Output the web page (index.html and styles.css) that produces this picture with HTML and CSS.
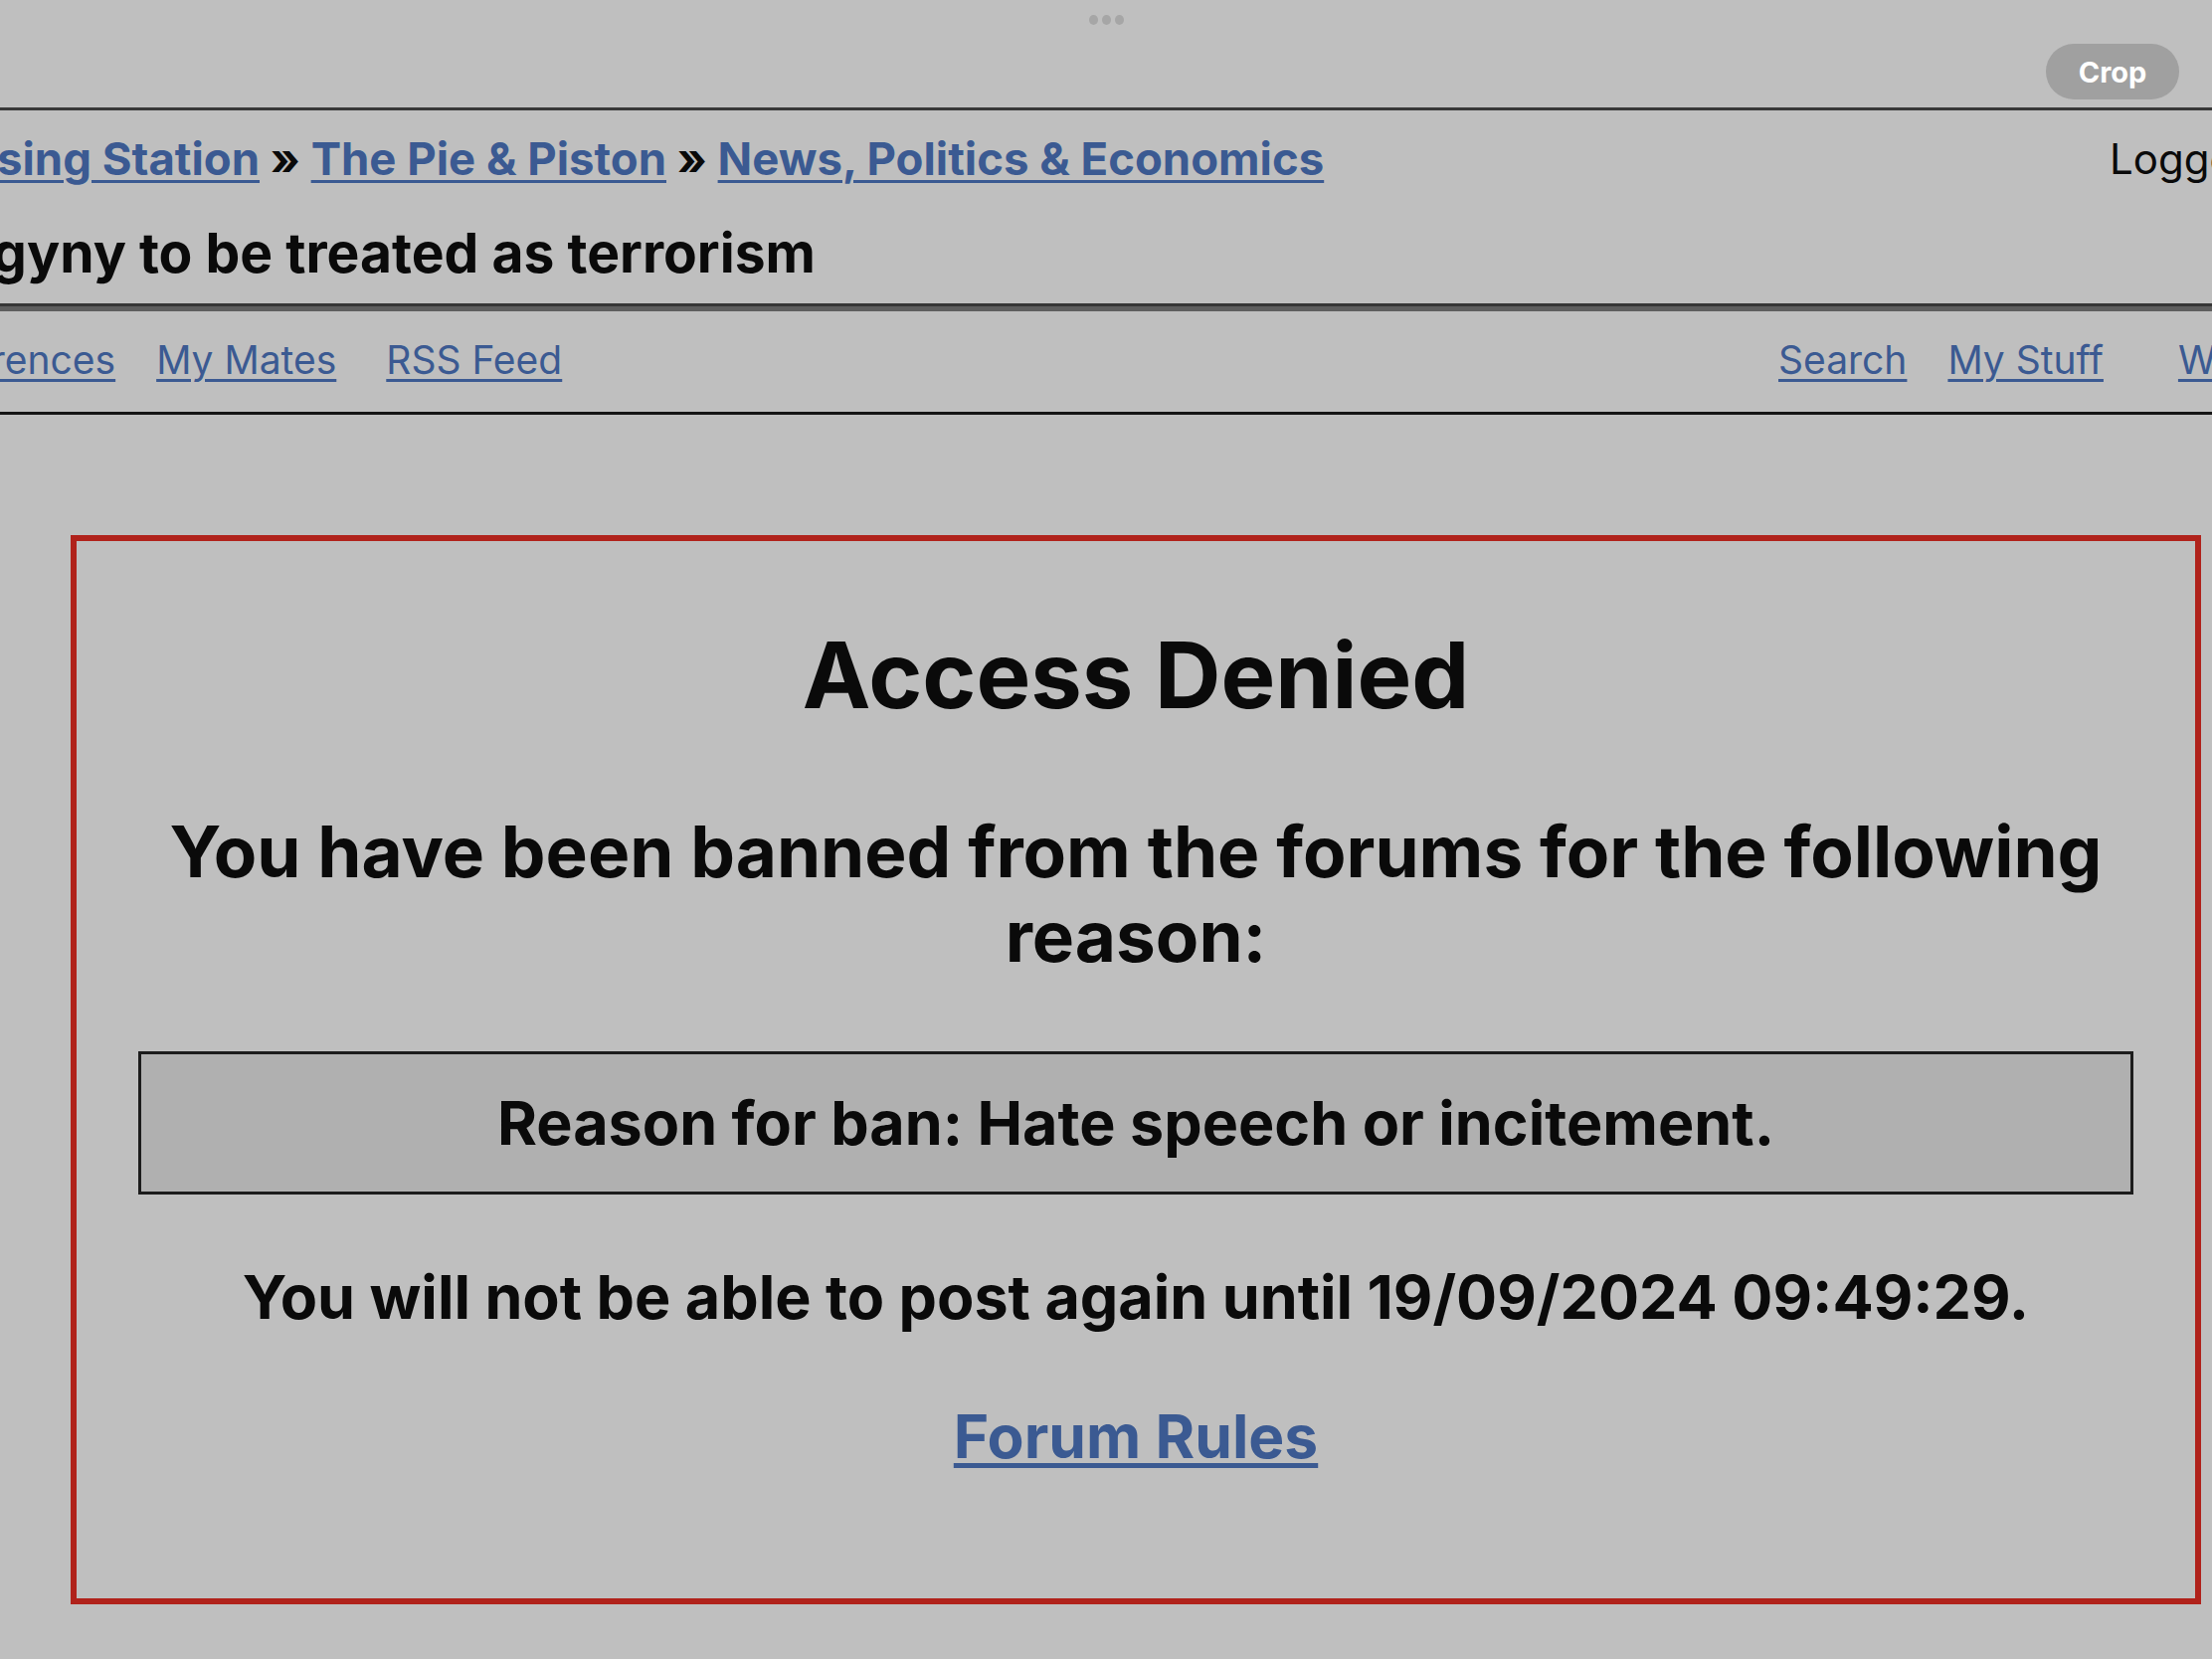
FILE: index.html
```html
<!DOCTYPE html>
<html lang="en">
<head>
<meta charset="utf-8">
<title>Access Denied</title>
<link rel="stylesheet" href="styles.css">
</head>
<body>
  <div class="toolbar">
    <div class="grabber"><span></span><span></span><span></span></div>
    <button class="crop-btn" type="button">Crop</button>
  </div>

  <div class="site">
    <header class="site-head">
      <div class="crumb-row">
        <div class="crumbs"><a href="#">Gassing Station</a> <span class="sep">»</span> <a href="#">The Pie &amp; Piston</a> <span class="sep">»</span> <a href="#">News, Politics &amp; Economics</a></div>
        <div class="login">Logged in as member</div>
      </div>
      <h2 class="topic-title">Misogyny to be treated as terrorism</h2>
    </header>

    <nav class="nav-row">
      <div class="nav-left">
        <a href="#">Preferences</a>
        <a href="#">My Mates</a>
        <a href="#" class="wide">RSS Feed</a>
      </div>
      <div class="nav-right">
        <a href="#">Search</a>
        <a href="#">My Stuff</a>
        <a href="#" class="wide-r">Who's On</a>
      </div>
    </nav>

    <main class="denied">
      <h1 class="denied-title">Access Denied</h1>
      <p class="banned">You have been banned from the forums for the following reason:</p>
      <div class="reason">Reason for ban: Hate speech or incitement.</div>
      <p class="until">You will not be able to post again until 19/09/2024 09:49:29.</p>
      <p class="rules-line"><a href="#" class="rules">Forum Rules</a></p>
    </main>
  </div>
</body>
</html>
```

FILE: styles.css
```css
html, body {
  margin: 0;
  padding: 0;
}

body {
  background: #bfbfbf;
  color: #0a0a0a;
  font-family: Inter, "Noto Sans", "Liberation Sans", sans-serif;
  overflow: hidden;
  width: 2224px;
  height: 1668px;
}

a {
  color: #3b5a92;
}

/* top strip with grabber and crop button */
.toolbar {
  height: 108px;
  box-sizing: border-box;
  padding-top: 15px;
  display: flex;
  flex-direction: column;
}

.grabber {
  display: flex;
  justify-content: center;
  gap: 4px;
  height: 10px;
}

.grabber span {
  width: 9px;
  height: 10px;
  border-radius: 50%;
  background: #a6a6a6;
}

.crop-btn {
  align-self: flex-end;
  margin: 19px 33px 0 0;
  width: 134px;
  height: 56px;
  border: 0;
  border-radius: 28px;
  background: #a0a0a0;
  color: #ffffff;
  font-family: Inter, "Noto Sans", sans-serif;
  font-weight: 700;
  font-size: 29px;
  padding: 0;
}

/* forum page, wider than the viewport */
.site {
  margin-right: -300px;
}

.site-head {
  border-top: 3px solid #383838;
  border-bottom: 3px solid #363636;
  padding: 19px 0 16px;
}

.crumb-row {
  display: grid;
  grid-template-columns: 1fr 403px;
  line-height: 60px;
  white-space: nowrap;
}

.crumbs {
  margin-left: -89px;
  font-size: 45.5px;
  font-weight: 700;
}

.crumbs a {
  text-decoration-thickness: 3px;
  text-underline-offset: 5px;
}

.sep {
  color: #0a0a0a;
}

.login {
  font-size: 42px;
  font-weight: 400;
}

.topic-title {
  margin: 29px 0 0 -139px;
  font-size: 55.2px;
  line-height: 70px;
  font-weight: 700;
  white-space: nowrap;
}

.nav-row {
  display: grid;
  grid-template-columns: 1fr 736px;
  border-top: 5px solid #5e5e5e;
  border-bottom: 3px solid #151515;
  padding: 21px 0 24px;
  font-size: 39px;
  line-height: 56px;
  white-space: nowrap;
}

.nav-left,
.nav-right {
  display: flex;
  gap: 41px;
}

.nav-left {
  margin-left: -107px;
}

.nav-row a {
  text-decoration-thickness: 3px;
  text-underline-offset: 5px;
}

.nav-left .wide {
  margin-left: 9px;
}

.nav-right .wide-r {
  margin-left: 34px;
}

/* ban notice */
.denied {
  margin: 121px 311px 0 71px;
  border: 6px solid #b0221b;
  padding: 80px 62px 123px;
  text-align: center;
}

.denied-title {
  margin: 0;
  font-size: 92px;
  line-height: 110px;
  font-weight: 700;
}

.banned {
  margin: 80px 0 0;
  font-size: 71px;
  line-height: 85px;
  font-weight: 700;
}

.reason {
  margin-top: 73px;
  border: 3px solid #1c1c1c;
  background: #b0b0b0;
  padding: 29px 0 29px;
  font-size: 61px;
  line-height: 80px;
  font-weight: 700;
}

.until {
  margin: 63px 0 0;
  font-size: 61px;
  line-height: 80px;
  font-weight: 700;
}

.rules-line {
  margin: 60px 0 0;
  font-size: 60.5px;
  line-height: 80px;
  font-weight: 700;
}

.rules {
  text-decoration-thickness: 5px;
  text-underline-offset: 5px;
}
```
